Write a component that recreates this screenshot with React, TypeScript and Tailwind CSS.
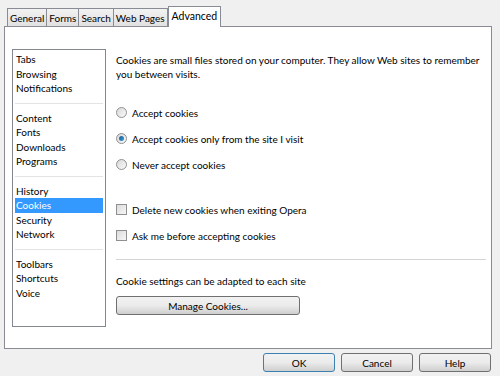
import React from "react";

const font = { fontFamily: '"Segoe UI", Lato, "Noto Sans", sans-serif' };

function Radio({ checked }: { checked?: boolean }) {
  return (
    <span className="relative inline-flex h-[11px] w-[11px] shrink-0 items-center justify-center rounded-full border border-[#8e8f8f] bg-gradient-to-br from-[#d8d8d8] to-[#fbfbfb]">
      {checked && (
        <span className="h-[5px] w-[5px] rounded-full bg-gradient-to-br from-[#1a5b8f] to-[#3a9ee0]" />
      )}
    </span>
  );
}

function Check() {
  return (
    <span className="inline-flex h-[11px] w-[11px] shrink-0 border border-[#8e8f8f] bg-gradient-to-br from-[#dcdcdc] to-[#f7f7f7]" />
  );
}

function Btn({ children, def, className }: { children: React.ReactNode; def?: boolean; className?: string }) {
  return (
    <div
      className={
        "flex h-[19px] items-center justify-center rounded-[3px] border bg-gradient-to-b from-[#f2f2f2] via-[#ebebeb] to-[#cfcfcf] text-black " +
        (def ? "border-[#3c7fb1] " : "border-[#707070] ") +
        (className || "")
      }
    >
      {children}
    </div>
  );
}

export default function App() {
  const tabs = ["General", "Forms", "Search", "Web Pages"];
  const groups = [
    ["Tabs", "Browsing", "Notifications"],
    ["Content", "Fonts", "Downloads", "Programs"],
    ["History", "Cookies", "Security", "Network"],
    ["Toolbars", "Shortcuts", "Voice"],
  ];
  return (
    <div className="h-[376px] w-[500px] bg-[#f0f0f0] text-[10px] leading-none text-black" style={font}>
      <div className="flex items-end pl-[7px] pt-[6px]">
        {tabs.map((t) => (
          <div
            key={t}
            className="-mr-px flex h-[18px] items-center border border-b-0 border-[#898c95] bg-gradient-to-b from-[#f2f2f2] to-[#e1e1e1] px-[2px]"
          >
            {t}
          </div>
        ))}
        <div className="relative z-10 -mb-px ml-px flex h-[21px] items-center border border-b-0 border-[#898c95] bg-white px-[3px] pb-[2px] text-[10.5px]">
          Advanced
        </div>
      </div>
      <div className="mx-[4px] mr-[8px] flex h-[323px] border border-[#898c95] bg-white pl-[7px] pt-[22px]">
        <div className="h-[278px] w-[94px] shrink-0 border border-[#828790] px-[2px] pt-[2px]">
          {groups.map((g, i) => (
            <div key={i} className={i < groups.length - 1 ? "mb-[7px] border-b border-[#e3e3e3] pb-[7px]" : ""}>
              {g.map((it) => (
                <div
                  key={it}
                  className={
                    "flex h-[14.5px] items-center pl-[1px] " +
                    (it === "Cookies" ? "bg-[#3399ff] text-white" : "")
                  }
                >
                  {it}
                </div>
              ))}
            </div>
          ))}
        </div>
        <div className="ml-[10px] flex w-[370px] flex-col pt-[4px]">
          <div className="w-[372px] leading-[14px]">
            Cookies are small files stored on your computer. They allow Web sites to remember you between visits.
          </div>
          <div className="mt-[26px] flex flex-col gap-[15px]">
            <div className="flex items-center gap-[5px]">
              <Radio />
              <span>Accept cookies</span>
            </div>
            <div className="flex items-center gap-[5px]">
              <Radio checked />
              <span>Accept cookies only from the site I visit</span>
            </div>
            <div className="flex items-center gap-[5px]">
              <Radio />
              <span>Never accept cookies</span>
            </div>
          </div>
          <div className="mt-[34px] flex flex-col gap-[15px]">
            <div className="flex items-center gap-[5px]">
              <Check />
              <span>Delete new cookies when exiting Opera</span>
            </div>
            <div className="flex items-center gap-[5px]">
              <Check />
              <span>Ask me before accepting cookies</span>
            </div>
          </div>
          <div className="mt-[18px] h-px w-[370px] bg-[#d5d5d5]" />
          <div className="mt-[16px]">Cookie settings can be adapted to each site</div>
          <Btn className="mt-[10px] w-[184px]">Manage Cookies...</Btn>
        </div>
      </div>
      <div className="mt-[4px] flex justify-end gap-[6px] pr-[9px]">
        <Btn def className="w-[72px]">OK</Btn>
        <Btn className="w-[72px]">Cancel</Btn>
        <Btn className="w-[72px]">Help</Btn>
      </div>
    </div>
  );
}
